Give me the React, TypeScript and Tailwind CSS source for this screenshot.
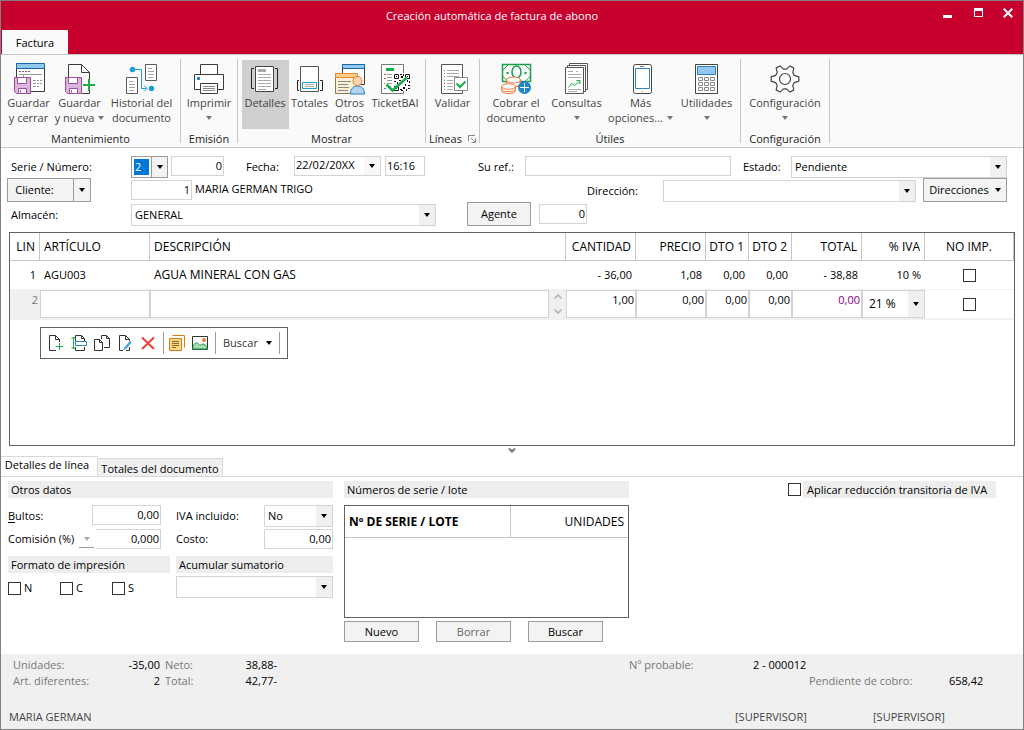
import React from 'react';

const Arrow = ({ className = 'text-black' }: { className?: string }) => (
  <svg width="6" height="4" viewBox="0 0 6 4" className={`shrink-0 ${className}`} aria-hidden="true">
    <path d="M0 0h6L3 4z" fill="currentColor" />
  </svg>
);

type SelectProps = {
  label: string;
  value: string;
  height?: string;
  className?: string;
  selectClass?: string;
};

const Select = ({ label, value, height = 'h-[22px]', className = '', selectClass = 'pl-[3px]' }: SelectProps) => (
  <div className={`relative flex items-stretch border border-[#d3d3d3] bg-white ${height} ${className}`}>
    <select aria-label={label} defaultValue={value} className={`w-full min-w-0 appearance-none outline-none ${selectClass}`}>
      <option value={value}>{value}</option>
    </select>
    <span className="pointer-events-none absolute inset-y-0 right-0 flex w-4 items-center justify-center bg-[#f0f0f0]">
      <Arrow />
    </span>
  </div>
);

type FieldProps = {
  id?: string;
  label?: string;
  value?: string;
  className?: string;
};

const Field = ({ id, label, value = '', className = '' }: FieldProps) => (
  <input
    id={id}
    aria-label={label}
    defaultValue={value}
    className={`h-5 min-w-0 border border-[#d3d3d3] bg-white px-px pb-0.5 outline-none ${className}`}
  />
);

const Check = ({ id, label }: { id?: string; label?: string }) => (
  <input id={id} aria-label={label} type="checkbox" className="block size-[13px] shrink-0 appearance-none border border-[#333] bg-white checked:bg-[#333]" />
);

/* Ribbon icons, 32x32 */

const Svg = ({ children }: { children: React.ReactNode }) => (
  <svg width="32" height="32" viewBox="0 0 32 32" fill="none" className="shrink-0" aria-hidden="true">
    {children}
  </svg>
);

const Floppy = () => (
  <g stroke="#9b4f9b">
    <path d="M1.500 14.500h16v16h-14l-2-2z" fill="#dcb4dc" />
    <path d="M4.500 14.500h9v6h-9z" fill="#fff" />
    <path d="M5.500 25.500h8v5h-8z" fill="#fff" />
    <path d="M7.500 27v2.500" />
  </g>
);

const IconGuardarCerrar = () => (
  <Svg>
    <path d="M3.500 1v27.500h28V1z" fill="#fff" stroke="#3b3b3b" />
    <path d="M3.500.5h28v5h-28z" fill="#92c7ee" stroke="#1369b0" />
    <path d="M6 8.500h2m1 0h2m1 0h2m1 0h2" stroke="#666" />
    <path d="M6 11.500h23M10.500 11v3M20 17.500h3m1 0h2m1 0h2m-9 3h3m1 0h2m1 0h2m-9 3h3m1 0h2" stroke="#999" />
    <Floppy />
  </Svg>
);

const IconGuardarNueva = () => (
  <Svg>
    <path d="M4.500 14V1.500h13l8 8V18M25.500 27v3.500H18" fill="none" stroke="#3b3b3b" />
    <path d="M17.500 1.500v8h8z" fill="#fff" stroke="#3b3b3b" />
    <Floppy />
    <path d="M25 16v12M19 22h12" stroke="#1aab4b" strokeWidth="2" />
  </Svg>
);

const IconHistorial = () => (
  <Svg>
    <path d="M19.500 1.500h11v16h-11zM.5 14.500h11v16H.5z" fill="#fff" stroke="#5a5a5a" />
    <path d="M22 5.500h4m-4 3h6m-6 3h6m-6 3h5M3 18.500h4m-4 3h6m-6 3h6m-6 3h5" stroke="#a5a5a5" />
    <path d="M6 6.500h9.500v19H20M18 22.500l3 3-3 3" stroke="#1b9ddb" />
    <circle cx="6.500" cy="6.500" r="2.700" fill="#1b9ddb" />
    <circle cx="25.500" cy="25.500" r="2.700" fill="#1b9ddb" />
  </Svg>
);

const IconImprimir = () => (
  <Svg>
    <path d="M7.500 11V1.500h17V11" fill="#fff" stroke="#3b3b3b" />
    <path d="M1.500 11.500h29v15h-29z" fill="#fff" stroke="#3b3b3b" />
    <path d="M7.500 20.500h17v10h-17z" fill="#fff" stroke="#3b3b3b" />
    <path d="M10 23.500h12m-12 2h12m-12 2h12" stroke="#888" />
    <path d="M4 14h3v3H4z" fill="#2a86cc" />
  </Svg>
);

const IconDetalles = () => (
  <Svg>
    <path d="M6.500 3.500h18v25h-18z" fill="#fff" stroke="#444" />
    <path d="M9 6h8v3H9z" fill="#aaa" />
    <path d="M9 11.500h13m-13 3h13m-13 3h13m-13 3h13m-13 3h13m-13 3h8" stroke="#aaa" />
    <path d="M5 5.500H2.500v20H5M26 5.500h2.500v20H26" stroke="#222" />
  </Svg>
);

const IconTotales = () => (
  <Svg>
    <path d="M6.500 3.500h18v25h-18z" fill="#fff" stroke="#555" />
    <path d="M8.500 19.500h14v6h-14z" fill="#fff" stroke="#1b9ddb" />
    <path d="M11 21.500h9m-9 2h9" stroke="#aaa" />
    <path d="M5 17.500H3.500v10H5M26 17.500h2.500v10H26" stroke="#222" />
  </Svg>
);

const IconOtros = () => (
  <Svg>
    <path d="M8.500 1.500h22v20h-22z" fill="#fff" stroke="#3b3b3b" />
    <path d="M8.500 1.500h22v4h-22z" fill="#92c7ee" stroke="#1369b0" />
    <path d="M1.500 10.500h22v20h-22z" fill="#fbf1d5" stroke="#8a7a58" />
    <path d="M1.500 10.500h22v4h-22z" fill="#fbcf85" stroke="#e28a36" />
    <path d="M4 18.500h13m-13 3h10m-10 3h11m-11 3h10" stroke="#888" />
    <path d="M16.500 31c0-5 2.500-8 7-8s7 3 7 8z" fill="#b0d5f1" stroke="#2a7fc0" />
    <circle cx="23.500" cy="18" r="4.500" fill="#fbd9b5" stroke="#e07b2c" />
  </Svg>
);

const IconTicketBai = () => (
  <Svg>
    <path d="M2.500 1.500h22v29h-22z" fill="#fff" stroke="#777" />
    <path d="M7 5h8v3H7z" fill="#1aab4b" />
    <path d="M5 11.500h2m-2 4h2m-2 5h1" stroke="#e04a3a" />
    <path d="M8 11.500h5m-5 3h5m-5 3h5m-5 3h5m-5 3h4" stroke="#999" />
    <path d="M5 25.500h2" stroke="#2a86cc" />
    <path d="M14 10h17v18H14z" fill="#fff" />
    <path d="M15.500 11.500h4v4h-4zM26.500 11.500h4v4h-4zM15.500 23.500h4v4h-4z" stroke="#111" />
    <path
      d="M17 13h1v1h-1zM28 13h1v1h-1zM17 25h1v1h-1zM21 11h2v1h-2zM22 13h2v2h-2zM24 11h1v2h-1zM20 17h2v1h-2zM15 18h2v1h-2zM18 19h1v2h-1zM24 17h2v1h-2zM28 17h1v2h-1zM30 18h1v2h-1zM21 26h2v1h-2zM24 24h2v2h-2zM27 26h1v2h-1zM29 22h2v1h-2zM26 21h1v2h-1zM29 25h2v1h-2zM22 28v-1h2v1z"
      fill="#111"
    />
    <path d="M7.500 21.500l6 6L28 14.500" stroke="#1aab4b" strokeWidth="2.500" />
  </Svg>
);

const IconValidar = () => (
  <Svg>
    <path d="M4.500 1.500h21v29h-21z" fill="#fff" stroke="#555" />
    <path d="M10 7.500h12m-12 3h12m-12 3h12m-12 4h6m-6 3h6m-6 3h6m-6 3h6" stroke="#aaa" />
    <path d="M7 7.500h1m-1 6h1m-1 7h1m-1 6h1" stroke="#e04a3a" />
    <path d="M7 10.500h1m-1 7h1m-1 6h1" stroke="#1aab4b" />
    <path d="M17.500 14.500h13v13h-13z" fill="#fff" stroke="#888" />
    <path d="M19.500 20.500l3.500 3.500 5.500-5.500" stroke="#1aab4b" strokeWidth="2" />
  </Svg>
);

const IconCobrar = () => (
  <Svg>
    <path d="M2.500 1.500h28v17h-28z" fill="#fff" stroke="#1a9e4b" strokeWidth="1.500" />
    <path d="M2.500 7.500l6-6M24.500 1.500l6 6M2.500 13l5 5M30.500 13l-5 5" stroke="#1a9e4b" />
    <ellipse cx="16.500" cy="9" rx="4.500" ry="6" stroke="#1a9e4b" strokeWidth="1.500" />
    <circle cx="7.500" cy="10" r="1.200" fill="#1a9e4b" />
    <circle cx="25.500" cy="10" r="1.200" fill="#1a9e4b" />
    <g fill="#fff" stroke="#ea7d3c">
      <path d="M6.500 16.500v7h14v-7" />
      <ellipse cx="13.500" cy="20.500" rx="7" ry="3" />
      <ellipse cx="13.500" cy="17" rx="7" ry="3" />
      <path d="M1.500 23.500v4c0 4 14 4 14 0v-4" />
      <ellipse cx="8.500" cy="26" rx="7" ry="2.700" />
      <ellipse cx="8.500" cy="23.500" rx="7" ry="2.700" />
    </g>
    <circle cx="24.500" cy="24.500" r="6.500" fill="#1f86cf" />
    <path d="M24.500 20v9M20 24.500h9" stroke="#fff" />
  </Svg>
);

const IconConsultas = () => (
  <Svg>
    <path d="M8.500.5h18v26h-18z" fill="#fff" stroke="#555" />
    <path d="M6.500 2.500h18v26h-18z" fill="#fff" stroke="#555" />
    <path d="M4.500 4.500h18v26h-18z" fill="#fff" stroke="#555" />
    <path d="M7 8.500h5m3 0h2m-10 3h13m-13 3h13m-13 12h13m-13 2h9" stroke="#aaa" />
    <path d="M7.500 24.500l3-4 3 2 5-4M15.500 17.500h3.500V21" stroke="#1aab4b" />
  </Svg>
);

const IconMovil = () => (
  <Svg>
    <rect x="8.500" y="1.500" width="18" height="29" rx="2" fill="#fff" stroke="#444" />
    <path d="M10.500 5.500h14v20h-14z" fill="#fff" stroke="#2a86cc" />
    <path d="M15 3.500h4M17 28.500h1" stroke="#777" />
  </Svg>
);

const IconCalculadora = () => (
  <Svg>
    <path d="M4.500 1.500h22v29h-22z" fill="#fff" stroke="#444" />
    <path d="M6.500 3.500h18v8h-18z" fill="#92c7ee" stroke="#2a7fc0" />
    <path
      d="M7.500 14.500h4v3h-4zm6 0h4v3h-4zm6 0h4v3h-4zm-12 5h4v3h-4zm6 0h4v3h-4zm6 0h4v3h-4zm-12 5h4v3h-4zm6 0h4v3h-4zm6 0h4v3h-4z"
      stroke="#888"
    />
  </Svg>
);

// six teeth, four points each
const gear = Array.from({ length: 6 }, (_, i) =>
  [[-21, 10], [-9, 14], [9, 14], [21, 10]]
    .map(([deg, r]) => {
      const a = ((i * 60 + deg) * Math.PI) / 180;
      return `${(16 + r * Math.cos(a)).toFixed(2)},${(16 + r * Math.sin(a)).toFixed(2)}`;
    })
    .join(' '),
).join(' ');

const IconConfig = () => (
  <Svg>
    <polygon points={gear} fill="#fff" stroke="#444" strokeWidth="1.200" strokeLinejoin="round" />
    <circle cx="16" cy="16" r="5.500" stroke="#444" strokeWidth="1.200" />
  </Svg>
);

type RibbonItem = {
  icon: React.ReactNode;
  lines: string[];
  width: string;
  arrow?: 'inline' | 'below';
  active?: boolean;
};

type RibbonGroup = { name: string; width: string; launcher?: boolean; items: RibbonItem[] };

const ribbon: RibbonGroup[] = [
  {
    name: 'Mantenimiento',
    width: 'w-[179px]',
    items: [
      { icon: <IconGuardarCerrar />, lines: ['Guardar', 'y cerrar'], width: 'w-[50px]' },
      { icon: <IconGuardarNueva />, lines: ['Guardar', 'y nueva'], width: 'w-[52px]', arrow: 'inline' },
      { icon: <IconHistorial />, lines: ['Historial del', 'documento'], width: 'w-[72px]' },
    ],
  },
  {
    name: 'Emisión',
    width: 'w-14',
    items: [{ icon: <IconImprimir />, lines: ['Imprimir'], width: 'w-14', arrow: 'below' }],
  },
  {
    name: 'Mostrar',
    width: 'w-[187px]',
    items: [
      { icon: <IconDetalles />, lines: ['Detalles'], width: 'w-[47px]', active: true },
      { icon: <IconTotales />, lines: ['Totales'], width: 'w-[42px]' },
      { icon: <IconOtros />, lines: ['Otros', 'datos'], width: 'w-[38px]' },
      { icon: <IconTicketBai />, lines: ['TicketBAI'], width: 'w-[53px]' },
    ],
  },
  {
    name: 'Líneas',
    width: 'w-[53px]',
    launcher: true,
    items: [{ icon: <IconValidar />, lines: ['Validar'], width: 'w-[53px]' }],
  },
  {
    name: 'Útiles',
    width: 'w-[260px]',
    items: [
      { icon: <IconCobrar />, lines: ['Cobrar el', 'documento'], width: 'w-[65px]' },
      { icon: <IconConsultas />, lines: ['Consultas'], width: 'w-14', arrow: 'below' },
      { icon: <IconMovil />, lines: ['Más', 'opciones...'], width: 'w-[72px]', arrow: 'inline' },
      { icon: <IconCalculadora />, lines: ['Utilidades'], width: 'w-[60px]', arrow: 'below' },
    ],
  },
  {
    name: 'Configuración',
    width: 'w-[88px]',
    items: [{ icon: <IconConfig />, lines: ['Configuración'], width: 'w-[88px]', arrow: 'below' }],
  },
];

const Ribbon = () => (
  <nav className="flex h-[94px] items-start border-y border-[#c6c6c6] bg-[#fafafa] pt-1">
    {ribbon.map((group) => (
      <React.Fragment key={group.name}>
        <section className={`flex shrink-0 flex-col items-center pt-px ${group.width}`}>
          <div className="flex">
            {group.items.map((item) => (
              <button
                key={item.lines.join(' ')}
                type="button"
                className={`flex h-[69px] flex-col items-center whitespace-nowrap pt-[3px] leading-[15px] text-[#444] ${item.width} ${item.active ? 'bg-[#cfcfcf]' : ''}`}
              >
                {item.icon}
                {item.lines.map((line, i) => (
                  <span key={line} className="flex items-center gap-1">
                    {line}
                    {item.arrow === 'inline' && i === 1 && <Arrow className="text-[#777]" />}
                  </span>
                ))}
                {item.arrow === 'below' && (
                  <span className="flex h-[15px] items-center">
                    <Arrow className="text-[#777]" />
                  </span>
                )}
              </button>
            ))}
          </div>
          <h2 className="flex items-center gap-1.5 pt-0.5 leading-4 text-[#222]">
            {group.name}
            {group.launcher && (
              <svg width="8" height="8" viewBox="0 0 8 8" fill="none" stroke="#888" aria-hidden="true">
                <path d="M.5 6V.5H7M3 3l4 4M7.500 3.500v4h-4" />
              </svg>
            )}
          </h2>
        </section>
        <div className="h-[84px] w-px shrink-0 bg-[#c6c6c6]" />
      </React.Fragment>
    ))}
  </nav>
);

const TitleBar = () => (
  <header className="bg-[#c8002d] text-white">
    <div className="flex h-[29px] items-center">
      <h1 className="flex-1 pt-0.5 pl-16 text-center text-[11px]">Creación automática de factura de abono</h1>
      <div className="flex w-[104px] items-center justify-end gap-5 pr-2.5 pb-1.5">
        <button type="button" aria-label="Minimizar" className="flex size-[11px] items-end">
          <span className="h-[3px] w-[9px] bg-white" />
        </button>
        <button type="button" aria-label="Maximizar" className="h-[9px] w-[9px] border border-t-[3px] border-white" />
        <button type="button" aria-label="Cerrar">
          <svg width="10" height="10" viewBox="0 0 10 10" stroke="#fff" strokeWidth="2">
            <path d="M.7.7l8.600 8.600M9.300.7L.7 9.300" />
          </svg>
        </button>
      </div>
    </div>
    <div className="flex h-6 pl-px">
      <a href="#factura" className="flex w-[66px] items-center justify-center bg-[#fafafa] pt-0.5 text-black">
        Factura
      </a>
    </div>
  </header>
);

const buttonClass = 'flex items-center justify-center border border-[#9b9b9b] bg-[#f3f3f3]';

const Cabecera = () => (
  <form className="pt-2 pr-4 pl-1.5">
    <div className="flex h-[22px] items-start">
      <label htmlFor="numero" className="w-[124px] pl-1 leading-[22px]">Serie / Número:</label>
      <div className="flex h-[22px] w-[37px] border border-[#9b9b9b]">
        <div className="relative flex w-full p-0.5">
          <select aria-label="Serie" className="w-[15px] appearance-none bg-[#0078d7] pl-px text-white outline-none">
            <option>2</option>
          </select>
          <span className="pointer-events-none absolute inset-y-0 right-0 flex w-4 items-center justify-center border-l border-[#9b9b9b] bg-[#f3f3f3]">
            <Arrow />
          </span>
        </div>
      </div>
      <Field id="numero" value="0" className="ml-[3px] w-[53px] text-right" />
      <label htmlFor="fecha" className="w-[70px] pl-[22px] leading-[22px]">Fecha:</label>
      <div className="flex h-5 w-[87px] border border-[#d3d3d3]">
        <input id="fecha" defaultValue="22/02/20XX" className="w-[69px] pb-0.5 pl-px outline-none" />
        <button type="button" aria-label="Abrir calendario" className="flex flex-1 items-center justify-center bg-[#f7f7f7]">
          <Arrow />
        </button>
      </div>
      <Field label="Hora" value="16:16" className="ml-1 w-10" />
      <label htmlFor="ref" className="w-[100px] pl-[53px] leading-[22px]">Su ref.:</label>
      <Field id="ref" className="w-[206px]" />
      <span className="w-[60px] pl-3 leading-[22px]">Estado:</span>
      <Select label="Estado" value="Pendiente" className="flex-1" />
    </div>

    <div className="flex h-6 items-start">
      <div className="flex h-6 w-[84px] items-stretch border border-[#9b9b9b] bg-[#f3f3f3]">
        <button type="button" className="flex-1 border-r border-[#9b9b9b] pr-3">Cliente:</button>
        <button type="button" aria-label="Más opciones de cliente" className="flex w-4 items-center justify-center">
          <Arrow />
        </button>
      </div>
      <div className="flex flex-1 items-start pt-0.5">
        <Field label="Código de cliente" value="1" className="ml-10 w-[61px] text-right" />
        <span className="flex-1 pl-[3px] leading-[18px]">MARIA GERMAN TRIGO</span>
        <span className="w-[76px] leading-[22px]">Dirección:</span>
        <Select label="Dirección" value="" className="w-[253px]" />
      </div>
      <button type="button" className={`ml-[7px] h-6 w-[84px] gap-1.5 ${buttonClass}`}>
        Direcciones <Arrow />
      </button>
    </div>

    <div className="flex h-6 items-start">
      <span className="w-[124px] pt-0.5 pl-1 leading-[22px]">Almacén:</span>
      <div className="pt-0.5">
        <Select label="Almacén" value="GENERAL" className="w-[305px]" />
      </div>
      <button type="button" className={`ml-[31px] h-6 w-16 ${buttonClass}`}>Agente</button>
      <div className="pt-0.5 pl-2">
        <Field label="Agente" value="0" className="w-12 text-right" />
      </div>
    </div>
  </form>
);

const columnas = [
  { name: 'LIN', th: 'text-right pr-1' },
  { name: 'ARTÍCULO', th: 'text-left pl-1' },
  { name: 'DESCRIPCIÓN', th: 'text-left pl-1' },
  { name: 'CANTIDAD', th: 'text-right pr-1' },
  { name: 'PRECIO', th: 'text-right pr-1' },
  { name: 'DTO 1', th: 'text-right pr-1' },
  { name: 'DTO 2', th: 'text-right pr-1' },
  { name: 'TOTAL', th: 'text-right pr-1' },
  { name: '% IVA', th: 'text-right pr-1' },
  { name: 'NO IMP.', th: 'text-center' },
];

const cellInput = 'block h-7 w-full min-w-0 border border-[#d3d3d3] bg-white px-px pb-2.5 text-right outline-none';

/* Line toolbar icons, 16x16 */
const herramientas = [
  {
    name: 'Nueva línea',
    icon: (
      <>
        <path d="M8 15.500H1.500V.5h6l4 4V7M7.500.5v4h4" stroke="#333" />
        <path d="M11.500 8v7M8 11.500h7" stroke="#1aab4b" />
      </>
    ),
  },
  {
    name: 'Insertar línea',
    icon: (
      <>
        <path d="M4.500 6V.5h6l3 3V6M10.500.5v3h3M4.500 12v3.500h9V12" stroke="#333" />
        <path d="M4.500 6.500h11v4h-11z" stroke="#2a86cc" fill="#fff" />
        <path d="M2.500 2v12M.5 4l2-2 2 2M.5 12l2 2 2-2" stroke="#1aab4b" />
      </>
    ),
  },
  {
    name: 'Duplicar línea',
    icon: (
      <>
        <path d="M.5 4.500h5l3 3v8h-8zM5.500 4.500v3h3" stroke="#333" />
        <path d="M7.500 4V.5h5l3 3v9H10M12.500.5v3h3" stroke="#333" />
      </>
    ),
  },
  {
    name: 'Modificar línea',
    icon: (
      <>
        <path d="M6 15.500H2.500V.5h6l4 4V6M8.500.5v4h4M12.500 12v3.500H9" stroke="#333" />
        <path d="M14 6.500l-6 7" stroke="#4a9fdd" strokeWidth="2.500" />
        <path d="M7 15l.5-2" stroke="#2a86cc" />
      </>
    ),
  },
  { name: 'Borrar línea', icon: <path d="M2 2.500l12 11.500M14 2.500L2 14" stroke="#e8403a" strokeWidth="2" /> },
];

const LineToolbar = () => (
  <div role="toolbar" aria-label="Líneas" className="mt-[7px] ml-[30px] flex h-8 w-[248px] items-center border border-[#636363] bg-white pl-[7px]">
    <div className="flex gap-[7px]">
      {herramientas.map((h) => (
        <button key={h.name} type="button" aria-label={h.name}>
          <svg width="16" height="16" viewBox="0 0 16 16" fill="none">{h.icon}</svg>
        </button>
      ))}
    </div>
    <div className="ml-[7px] h-[22px] w-px bg-[#9b9b9b]" />
    <div className="ml-[5px] flex gap-[7px]">
      <button type="button" aria-label="Notas">
        <svg width="16" height="16" viewBox="0 0 16 16" fill="none" stroke="#e07b1c">
          <path d="M3.500.5h12v12" fill="#fff" />
          <path d="M.5 3.500h12v12H.5z" fill="#fbd687" />
          <path d="M3 6.500h7m-7 2h7m-7 2h7m-7 2h4" stroke="#8a6a30" />
        </svg>
      </button>
      <button type="button" aria-label="Imagen">
        <svg width="16" height="16" viewBox="0 0 16 16" fill="none">
          <path d="M.5 1.500h15v13H.5z" fill="#fff" stroke="#333" />
          <path d="M1 11c3-5 5-3 7-.5 2-2 4-2 7 1V14H1z" fill="#a8dcb5" stroke="#1a9e4b" />
          <circle cx="12" cy="5" r="2" fill="#e8803a" />
        </svg>
      </button>
    </div>
    <div className="ml-[7px] h-[22px] w-px bg-[#9b9b9b]" />
    <button type="button" className="ml-[7px] flex items-center gap-2 text-[#333]">
      Buscar <Arrow />
    </button>
    <div className="ml-[7px] h-[22px] w-px bg-[#9b9b9b]" />
  </div>
);

const Lineas = () => (
  <div className="mx-2 mt-1.5 min-h-[214px] flex-1 border border-[#636363]">
    <table className="w-full table-fixed border-separate border-spacing-0">
      <colgroup>
        <col className="w-[30px]" />
        <col className="w-[110px]" />
        <col />
        <col className="w-[70px]" />
        <col className="w-[70px]" />
        <col className="w-[43px]" />
        <col className="w-[43px]" />
        <col className="w-[70px]" />
        <col className="w-[63px]" />
        <col className="w-[89px]" />
      </colgroup>
      <thead>
        <tr className="h-7 text-xs">
          {columnas.map((c) => (
            <th key={c.name} className={`border-r border-b border-[#c6c6c6] p-0 font-normal whitespace-nowrap ${c.th}`}>
              {c.name}
            </th>
          ))}
        </tr>
      </thead>
      <tbody>
        <tr className="h-[29px] text-right">
          <td className="border-b border-[#f0f0f0] pr-1">1</td>
          <td className="border-b border-[#f0f0f0] pl-1 text-left">AGU003</td>
          <td className="border-b border-[#f0f0f0] p-0 pl-1 text-left text-xs">AGUA MINERAL CON GAS</td>
          <td className="border-b border-[#f0f0f0] pr-1">- 36,00</td>
          <td className="border-b border-[#f0f0f0] pr-1">1,08</td>
          <td className="border-b border-[#f0f0f0] pr-1">0,00</td>
          <td className="border-b border-[#f0f0f0] pr-1">0,00</td>
          <td className="border-b border-[#f0f0f0] pr-1">- 38,88</td>
          <td className="border-b border-[#f0f0f0] pr-1">10 %</td>
          <td className="border-b border-[#f0f0f0]">
            <div className="flex justify-center">
              <Check label="No imprimir línea 1" />
            </div>
          </td>
        </tr>
        <tr>
          <td className="border-b-2 border-[#f0f0f0] bg-[#f0f0f0] p-0 pr-0.5 pb-2 text-right text-[#777]">2</td>
          <td className="border-b-2 border-[#f0f0f0] p-0">
            <input aria-label="Artículo" className={cellInput} />
          </td>
          <td className="border-b-2 border-[#f0f0f0] p-0">
            <div className="flex bg-[#f0f0f0]">
              <input aria-label="Descripción" className={cellInput} />
              <div className="flex w-[17px] shrink-0 flex-col items-center justify-between py-1">
                <button type="button" aria-label="Subir">
                  <svg width="8" height="5" viewBox="0 0 8 5" fill="none" stroke="#b0b0b0" strokeWidth="1.500" className="block">
                    <path d="M.5 4.500L4 1l3.500 3.500" />
                  </svg>
                </button>
                <button type="button" aria-label="Bajar">
                  <svg width="8" height="5" viewBox="0 0 8 5" fill="none" stroke="#b0b0b0" strokeWidth="1.500" className="block">
                    <path d="M.5.5L4 4 7.500.5" />
                  </svg>
                </button>
              </div>
            </div>
          </td>
          <td className="border-b-2 border-[#f0f0f0] p-0">
            <input aria-label="Cantidad" defaultValue="1,00" className={cellInput} />
          </td>
          <td className="border-b-2 border-[#f0f0f0] p-0">
            <input aria-label="Precio" defaultValue="0,00" className={cellInput} />
          </td>
          <td className="border-b-2 border-[#f0f0f0] p-0">
            <input aria-label="Descuento 1" defaultValue="0,00" className={cellInput} />
          </td>
          <td className="border-b-2 border-[#f0f0f0] p-0">
            <input aria-label="Descuento 2" defaultValue="0,00" className={cellInput} />
          </td>
          <td className="border-b-2 border-[#f0f0f0] p-0">
            <input aria-label="Total" defaultValue="0,00" className={`${cellInput} text-[#800080]`} />
          </td>
          <td className="border-b-2 border-[#f0f0f0] p-0">
            <Select label="IVA" value="21 %" height="h-7" selectClass="pl-1.5 text-xs" />
          </td>
          <td className="border-b-2 border-[#f0f0f0] p-0">
            <div className="flex justify-center">
              <Check label="No imprimir línea 2" />
            </div>
          </td>
        </tr>
      </tbody>
    </table>
    <LineToolbar />
  </div>
);

const sectionTitle = 'h-[17px] bg-[#ededed] pl-[3px] leading-[17px]';

const Detalles = () => (
  <div className="flex h-[177px] items-start gap-[11px] px-[7px] pt-1">
    <div className="w-[325px] shrink-0">
      <h3 className={sectionTitle}>Otros datos</h3>
      <div className="mt-[7px] flex gap-[15px]">
        <div className="flex flex-1 flex-col gap-0.5">
          <div className="flex h-[22px] items-start justify-between">
            <label htmlFor="bultos" className="leading-[22px]">
              <span className="underline underline-offset-2">B</span>ultos:
            </label>
            <Field id="bultos" value="0,00" className="w-[69px] text-right" />
          </div>
          <div className="flex h-[22px] items-start">
            <label htmlFor="comision" className="flex-1 leading-5">Comisión (%)</label>
            <button type="button" aria-label="Tipo de comisión" className="mr-0.5 flex h-[19px] w-[15px] items-center justify-center border-b border-[#9b9b9b] pt-0.5">
              <Arrow className="text-[#aaa]" />
            </button>
            <Field id="comision" value="0,000" className="w-[65px] border-l-0 text-right" />
          </div>
        </div>
        <div className="flex w-[157px] flex-col gap-0.5">
          <div className="flex h-[22px] justify-between">
            <span className="leading-[22px]">IVA incluido:</span>
            <Select label="IVA incluido" value="No" className="w-[69px]" />
          </div>
          <div className="flex h-[22px] items-start justify-between">
            <label htmlFor="costo" className="leading-5">Costo:</label>
            <Field id="costo" value="0,00" className="w-[69px] text-right" />
          </div>
        </div>
      </div>
      <div className="mt-[5px] flex gap-1.5">
        <div className="w-[162px]">
          <h3 className={sectionTitle}>Formato de impresión</h3>
          <div className="mt-[7px] flex">
            {['N', 'C', 'S'].map((f) => (
              <label key={f} className="flex w-[52px] items-center gap-[3px]">
                <Check /> {f}
              </label>
            ))}
          </div>
        </div>
        <div className="w-[157px]">
          <h3 className={sectionTitle}>Acumular sumatorio</h3>
          <div className="mt-[3px]">
            <Select label="Acumular sumatorio" value="" />
          </div>
        </div>
      </div>
    </div>

    <div className="w-[285px] shrink-0">
      <h3 className={sectionTitle}>Números de serie / lote</h3>
      <div className="mt-[7px] h-[113px] border border-[#636363]">
        <table className="w-full table-fixed border-separate border-spacing-0">
          <thead>
            <tr className="h-8 text-xs">
              <th className="w-[166px] border-r border-b border-[#c6c6c6] p-0 pl-1 text-left font-bold">Nº DE SERIE / LOTE</th>
              <th className="border-b border-[#c6c6c6] p-0 pr-1 text-right font-normal">UNIDADES</th>
            </tr>
          </thead>
          <tbody />
        </table>
      </div>
      <div className="mt-[3px] flex gap-[17px]">
        <button type="button" className={`h-[21px] w-[75px] pt-0.5 ${buttonClass}`}>Nuevo</button>
        <button type="button" disabled className={`h-[21px] w-[75px] pt-0.5 text-[#666] ${buttonClass}`}>Borrar</button>
        <button type="button" className={`h-[21px] w-[75px] pt-0.5 ${buttonClass}`}>Buscar</button>
      </div>
    </div>

    <div className="mr-5 ml-auto flex w-[208px] items-center gap-0.5">
      <Check id="reduccion" />
      <label htmlFor="reduccion" className="h-[17px] flex-1 bg-[#ededed] pl-1 leading-[17px] whitespace-nowrap">
        Aplicar reducción transitoria de IVA
      </label>
    </div>
  </div>
);

const Pie = () => (
  <footer className="flex h-[75px] flex-col justify-between bg-[#f0f0f0] pt-[3px] pb-1">
    <div className="flex items-start pl-3 leading-4 text-[#777]">
      <dl className="grid grid-cols-[84px_63px_1fr] text-[#777]">
        <dt>Unidades:</dt>
        <dd className="text-right text-black">-35,00</dd>
        <dd className="grid grid-cols-[60px_52px] pl-[5px]">
          <span>Neto:</span>
          <span className="text-right text-black">38,88-</span>
        </dd>
        <dt>Art. diferentes:</dt>
        <dd className="text-right text-black">2</dd>
        <dd className="grid grid-cols-[60px_52px] pl-[5px]">
          <span>Total:</span>
          <span className="text-right text-black">42,77-</span>
        </dd>
      </dl>
      <div className="ml-auto w-[394px]">
        <p className="flex">
          <span className="w-[124px]">Nº probable:</span>
          <span className="text-black">2 - 000012</span>
        </p>
        <p className="flex pl-[180px]">
          <span className="w-[140px]">Pendiente de cobro:</span>
          <span className="text-black">658,42</span>
        </p>
      </div>
    </div>
    <div className="flex pl-2 leading-4 text-[#444]">
      <span className="flex-1">MARIA GERMAN</span>
      <span className="w-[138px]">[SUPERVISOR]</span>
      <span className="w-[150px]">[SUPERVISOR]</span>
    </div>
  </footer>
);

export default function App() {
  return (
    <div className="flex min-h-screen flex-col border border-[#808080] bg-white font-['Open_Sans','Noto_Sans',sans-serif] text-[11px] text-black">
      <TitleBar />
      <Ribbon />
      <main className="flex flex-1 flex-col">
        <Cabecera />
        <Lineas />
        <button type="button" aria-label="Contraer detalles" className="mx-auto flex h-2.5 w-4 items-start justify-center pt-0.5">
          <svg width="8" height="5" viewBox="0 0 8 5" fill="none" stroke="#777" strokeWidth="2">
            <path d="M1 .5l3 3 3-3" />
          </svg>
        </button>
        <div role="tablist" className="flex h-[21px] items-end border-b border-[#d9d9d9]">
          <button type="button" role="tab" aria-selected="true" className="h-5 w-[97px] border-t border-r border-[#d9d9d9] bg-white pr-1 pb-0.5">
            Detalles de línea
          </button>
          <button type="button" role="tab" aria-selected="false" className="h-[18px] w-[125px] border-t border-r border-[#d9d9d9] bg-[#f0f0f0] pt-0.5">
            Totales del documento
          </button>
        </div>
        <Detalles />
      </main>
      <Pie />
    </div>
  );
}
